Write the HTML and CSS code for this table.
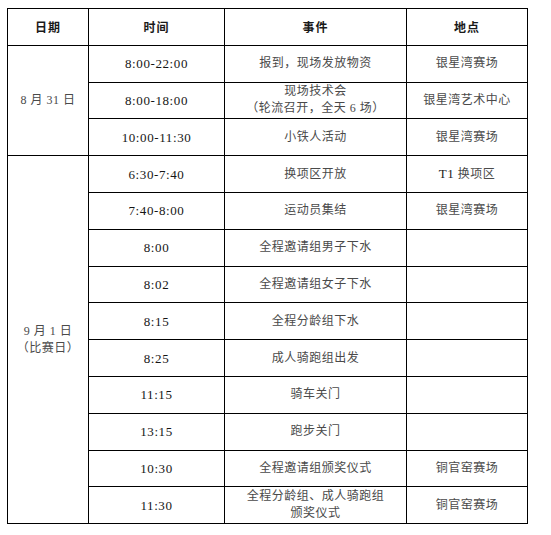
FILE: index.html
```html
<!DOCTYPE html>
<html lang="zh">
<head>
<meta charset="utf-8">
<title>赛事日程</title>
<link rel="stylesheet" href="styles.css">
</head>
<body>
<table class="schedule">
  <colgroup>
    <col class="c-date"><col class="c-time"><col class="c-event"><col class="c-place">
  </colgroup>
  <thead>
    <tr><th>日期</th><th>时间</th><th>事件</th><th>地点</th></tr>
  </thead>
  <tbody>
    <tr>
      <td rowspan="3" class="date">8 月 31 日</td>
      <td class="time">8:00-22:00</td>
      <td>报到，现场发放物资</td>
      <td>银星湾赛场</td>
    </tr>
    <tr>
      <td class="time">8:00-18:00</td>
      <td class="two">现场技术会<br>（轮流召开，全天 6 场）</td>
      <td>银星湾艺术中心</td>
    </tr>
    <tr>
      <td class="time">10:00-11:30</td>
      <td>小铁人活动</td>
      <td>银星湾赛场</td>
    </tr>
    <tr>
      <td rowspan="10" class="date">9 月 1 日<br>（比赛日）</td>
      <td class="time">6:30-7:40</td>
      <td>换项区开放</td>
      <td><span class="latin">T1</span> 换项区</td>
    </tr>
    <tr>
      <td class="time">7:40-8:00</td>
      <td>运动员集结</td>
      <td>银星湾赛场</td>
    </tr>
    <tr>
      <td class="time">8:00</td>
      <td>全程邀请组男子下水</td>
      <td></td>
    </tr>
    <tr>
      <td class="time">8:02</td>
      <td>全程邀请组女子下水</td>
      <td></td>
    </tr>
    <tr>
      <td class="time">8:15</td>
      <td>全程分龄组下水</td>
      <td></td>
    </tr>
    <tr>
      <td class="time">8:25</td>
      <td>成人骑跑组出发</td>
      <td></td>
    </tr>
    <tr>
      <td class="time">11:15</td>
      <td>骑车关门</td>
      <td></td>
    </tr>
    <tr>
      <td class="time">13:15</td>
      <td>跑步关门</td>
      <td></td>
    </tr>
    <tr>
      <td class="time">10:30</td>
      <td>全程邀请组颁奖仪式</td>
      <td>铜官窑赛场</td>
    </tr>
    <tr>
      <td class="time">11:30</td>
      <td class="two">全程分龄组、成人骑跑组<br>颁奖仪式</td>
      <td>铜官窑赛场</td>
    </tr>
  </tbody>
</table>
</body>
</html>
```
FILE: styles.css
```css
html, body {
  margin: 0;
  padding: 0;
  background: #ffffff;
}

body {
  padding: 8px 0 0 7px;
  font-family: "Liberation Serif", "Noto Sans CJK SC", serif;
  color: #4a4a4a;
}

.schedule {
  border-collapse: collapse;
  table-layout: fixed;
  width: 520px;
}

.c-date { width: 81px; }
.c-time { width: 136px; }
.c-event { width: 182px; }
.c-place { width: 121px; }

.schedule th,
.schedule td {
  border: 1px solid #000;
  height: 35.8px;
  padding: 0;
  text-align: center;
  vertical-align: middle;
  font-size: 12px;
  letter-spacing: 0.5px;
  line-height: 17px;
}

.schedule th {
  font-family: "Noto Sans CJK SC", sans-serif;
  font-weight: 700;
  color: #1a1a1a;
  letter-spacing: 1px;
}

.schedule td {
  font-family: "Liberation Serif", "Noto Sans CJK SC", serif;
  font-weight: 400;
  color: #4a4a4a;
}

.schedule td.time {
  font-size: 13px;
  color: #151515;
  letter-spacing: 0.6px;
}

.latin {
  font-size: 13px;
  color: #222;
}
```
